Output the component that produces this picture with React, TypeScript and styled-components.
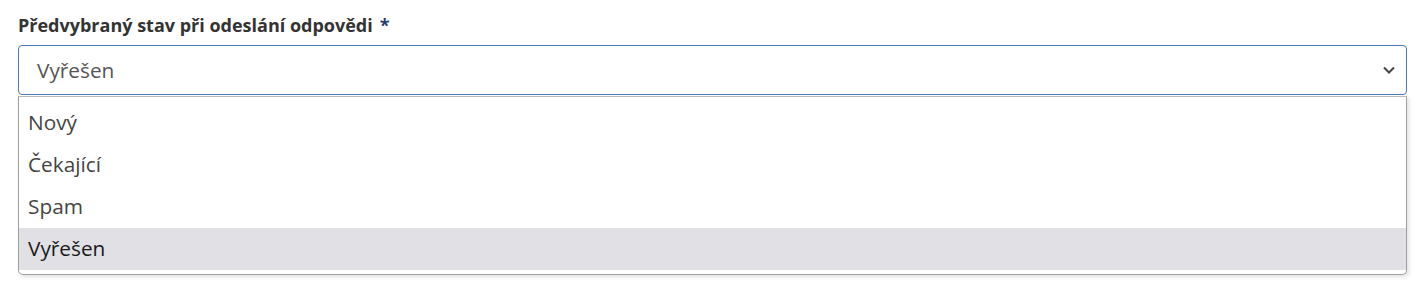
import React from "react";
import styled, { createGlobalStyle } from "styled-components";

const Global = createGlobalStyle`
  html, body { margin: 0; padding: 0; background: #fff; }
  body { font-family: "Open Sans", "Noto Sans", sans-serif; overflow: hidden; }
`;

const Page = styled.div`
  padding: 12px 17px 0 18px;
  width: 1424px;
  height: 281px;
  box-sizing: border-box;
  overflow: hidden;
`;

const Label = styled.label`
  display: block;
  font-size: 18px;
  font-weight: 700;
  color: #333;
  line-height: 26px;
  margin-bottom: 7px;
`;

const Required = styled.span`
  color: #1f3f73;
  margin-left: 7px;
`;

const Field = styled.div`
  position: relative;
`;

const SelectBox = styled.div`
  height: 50px;
  box-sizing: border-box;
  border: 1px solid #4a78b8;
  border-radius: 4px;
  display: flex;
  align-items: center;
  justify-content: space-between;
  padding: 0 10px 0 18px;
  font-size: 20.8px;
  color: #555;
`;

const Below = styled.div`
  margin-top: 12px;
  height: 150px;
  border: 1px solid #ccc;
  border-radius: 4px;
`;

const Popup = styled.ul`
  position: absolute;
  top: 51px;
  left: 0;
  right: 0;
  margin: 0;
  padding: 5px 0 4px;
  list-style: none;
  background: #fff;
  border: 1px solid #a0a0a0;
  border-top-color: #bbb;
  border-radius: 0 0 5px 5px;
  box-shadow: 2px 2px 4px rgba(0, 0, 0, 0.12);
`;

const Option = styled.li<{ $active?: boolean }>`
  height: 42px;
  line-height: 40px;
  padding-left: 9px;
  font-size: 20.8px;
  color: ${(p) => (p.$active ? "#1a1a1a" : "#444")};
  background: ${(p) => (p.$active ? "#e1e0e5" : "transparent")};
`;

const options = ["Nový", "Čekající", "Spam", "Vyřešen"];

export default function App() {
  return (
    <Page>
      <Global />
      <Label>
        Předvybraný stav při odeslání odpovědi<Required>*</Required>
      </Label>
      <Field>
        <SelectBox>
          <span>Vyřešen</span>
          <svg width="14" height="14" viewBox="0 0 14 14">
            <path d="M2 4.5 L7 9.5 L12 4.5" fill="none" stroke="#444" strokeWidth="2" />
          </svg>
        </SelectBox>
        <Below />
        <Popup>
          {options.map((o) => (
            <Option key={o} $active={o === "Vyřešen"}>
              {o}
            </Option>
          ))}
        </Popup>
      </Field>
    </Page>
  );
}
